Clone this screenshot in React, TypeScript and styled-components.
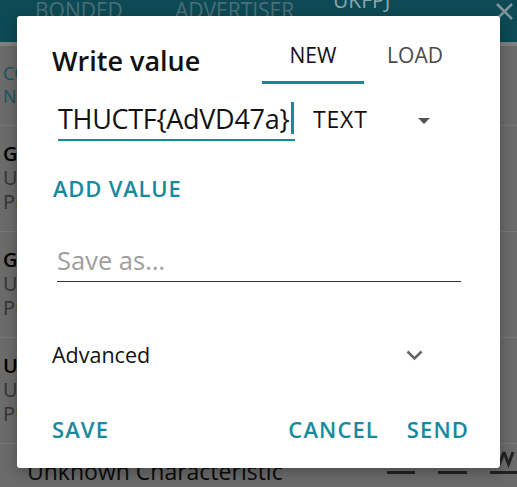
import React from "react";
import styled, { createGlobalStyle } from "styled-components";

const TEAL = "#17899d";

const Global = createGlobalStyle`
  html, body { margin: 0; padding: 0; background: #6b6b6b; overflow: hidden; }
  body { font-family: "Open Sans", "Liberation Sans", sans-serif; }
  * { box-sizing: border-box; }
`;

const Screen = styled.div`
  position: relative;
  width: 517px;
  height: 487px;
  overflow: hidden;
  background: #6b6b6b;
  font-family: "Open Sans", "Liberation Sans", sans-serif;
`;

/* ---------- background page (dimmed by the modal) ---------- */

const AppBar = styled.header`
  height: 42px;
  background: #0d4a55;
  display: flex;
  align-items: flex-start;
  padding-left: 35px;
`;

const AppTab = styled.div<{ $w?: number; $raised?: boolean }>`
  width: ${(p) => (p.$w ? `${p.$w}px` : "auto")};
  font-size: 21px;
  line-height: 1;
  color: ${(p) => (p.$raised ? "#8ea6aa" : "#4c6f76")};
  margin-top: ${(p) => (p.$raised ? "-10px" : "0")};
  white-space: nowrap;
`;

const CloseIcon = styled.svg`
  margin-left: auto;
  margin-right: 3px;
  margin-top: 2px;
  flex-shrink: 0;
`;

const AppBarEdge = styled.div`
  height: 4px;
  background: #7f7f7f;
`;

const ListHeader = styled.div`
  height: 79px;
  padding: 16px 0 0 3px;
  font-size: 18px;
  line-height: 23px;
  color: #14555f;
  white-space: nowrap;
`;

const ServiceItem = styled.div`
  height: 106px;
  border-top: 1px solid #787878;
  padding: 16px 0 0 3px;
  white-space: nowrap;
`;

const ItemTitle = styled.div`
  font-size: 20px;
  line-height: 24px;
  font-weight: 600;
  color: #000;
`;

const ItemSub = styled.div`
  font-size: 20px;
  line-height: 24px;
  color: #343434;
`;

const CharRow = styled.div`
  display: flex;
  align-items: flex-start;
  border-top: 1px solid #787878;
  padding: 13px 0 0 27px;
  height: 60px;
`;

const CharName = styled.div`
  font-size: 23px;
  line-height: 28px;
  color: #0a0a0a;
  white-space: nowrap;
`;

const CharIcons = styled.div`
  margin-left: auto;
  margin-right: -2px;
  margin-top: -10px;
  display: flex;
  gap: 23px;
`;

/* ---------- dialog ---------- */

const Dialog = styled.div`
  position: absolute;
  left: 17px;
  top: 16px;
  width: 483px;
  height: 452px;
  background: #fff;
  border-radius: 3px;
  box-shadow: 0 4px 14px rgba(0, 0, 0, 0.3);
  padding: 0 34px 0 35px;
  display: flex;
  flex-direction: column;
  color: #111;
`;

const TitleRow = styled.div`
  display: flex;
  height: 68px;
  flex-shrink: 0;
`;

const Title = styled.h2`
  margin: 0;
  height: 68px;
  padding-top: 21px;
  display: flex;
  align-items: center;
  font-size: 27px;
  line-height: 1;
  font-weight: 600;
  letter-spacing: 0;
  white-space: nowrap;
`;

const Tabs = styled.div`
  margin-left: auto;
  display: flex;
`;

const Tab = styled.div<{ $active?: boolean }>`
  width: 102px;
  height: 68px;
  padding-top: 14px;
  display: flex;
  align-items: center;
  justify-content: center;
  font-size: 21px;
  line-height: 1;
  color: ${(p) => (p.$active ? "#111" : "#4a4a4a")};
  border-bottom: 3px solid ${(p) => (p.$active ? TEAL : "transparent")};
`;

const InputRow = styled.div`
  display: flex;
  align-items: flex-end;
  height: 57px;
  flex-shrink: 0;
`;

const ValueField = styled.div`
  margin-left: 6px;
  width: 237px;
  height: 44px;
  border-bottom: 2px solid ${TEAL};
  display: flex;
  align-items: center;
  font-size: 27px;
  line-height: 1;
  letter-spacing: -0.3px;
  color: #111;
  white-space: nowrap;
`;

const Caret = styled.span`
  display: inline-block;
  width: 2.5px;
  height: 32px;
  margin-left: 2px;
  background: ${TEAL};
`;

const TypeSelect = styled.div`
  margin-left: 18px;
  width: 117px;
  height: 44px;
  display: flex;
  align-items: center;
  justify-content: space-between;
  font-size: 23px;
  line-height: 1;
  letter-spacing: 0.8px;
  color: #111;
`;

const Triangle = styled.span`
  width: 0;
  height: 0;
  margin-top: 3px;
  border-left: 6.5px solid transparent;
  border-right: 6.5px solid transparent;
  border-top: 6px solid #555;
`;

const TextButton = styled.button`
  background: none;
  border: 0;
  padding: 0;
  font-family: inherit;
  font-size: 22px;
  line-height: 1;
  font-weight: 600;
  letter-spacing: 1.1px;
  color: ${TEAL};
  white-space: nowrap;
  cursor: pointer;
`;

const AddValue = styled(TextButton)`
  align-self: flex-start;
  margin: 27px 0 0 1px;
  height: 40px;
  letter-spacing: 0.8px;
`;

const SaveInput = styled.input`
  margin: 31px 0 0 5px;
  width: 404px;
  height: 43px;
  flex-shrink: 0;
  padding: 0;
  border: 0;
  border-bottom: 1px solid #333;
  outline: none;
  background: transparent;
  font-family: inherit;
  font-size: 25.5px;
  color: #111;
  &::placeholder { color: #9e9e9e; }
`;

const AdvancedRow = styled.div`
  margin-top: 49px;
  height: 48px;
  flex-shrink: 0;
  display: flex;
  align-items: center;
  justify-content: space-between;
  padding-right: 43px;
  font-size: 21.5px;
  line-height: 1;
  font-weight: 500;
  color: #111;
`;

const ButtonRow = styled.div`
  margin-top: 29px;
  margin-right: -3px;
  height: 41px;
  flex-shrink: 0;
  display: flex;
  align-items: center;
`;

const Spacer = styled.div`
  flex: 1;
`;

const SendButton = styled(TextButton)`
  margin-left: 28px;
`;

const ReadIcon = () => (
  <svg width="28" height="28" viewBox="0 0 28 28">
    <path d="M14 4v14M8 12l6 6 6-6" stroke="#222" strokeWidth="3" fill="none" />
    <rect x="0" y="24" width="28" height="3" fill="#222" />
  </svg>
);
const WriteIcon = () => (
  <svg width="29" height="28" viewBox="0 0 29 28">
    <path d="M14.5 20V6M8.5 12l6-6 6 6" stroke="#222" strokeWidth="3" fill="none" />
    <rect x="0" y="24" width="29" height="3" fill="#222" />
  </svg>
);
const NotifyIcon = () => (
  <svg width="29" height="28" viewBox="0 0 29 28">
    <path d="M5 5l4.5 12L14 5M14 5l4.5 12L23 5" stroke="#222" strokeWidth="3" fill="none" />
    <rect x="0" y="24" width="29" height="3" fill="#222" />
  </svg>
);

export default function App() {
  return (
    <>
      <Global />
      <Screen>
        <AppBar>
          <AppTab $w={140}>BONDED</AppTab>
          <AppTab $w={158}>ADVERTISER</AppTab>
          <AppTab $raised>UKFPJ</AppTab>
          <CloseIcon width="19" height="19" viewBox="0 0 19 19">
            <path d="M2 2l15 15M17 2L2 17" stroke="#7f9599" strokeWidth="2.5" />
          </CloseIcon>
        </AppBar>
        <AppBarEdge />
        <ListHeader>
          <div>CONNECTED</div>
          <div>NOT BONDED</div>
        </ListHeader>
        <ServiceItem>
          <ItemTitle>Generic Access</ItemTitle>
          <ItemSub>UUID: 0x1800</ItemSub>
          <ItemSub>PRIMARY SERVICE</ItemSub>
        </ServiceItem>
        <ServiceItem>
          <ItemTitle>Generic Attribute</ItemTitle>
          <ItemSub>UUID: 0x1801</ItemSub>
          <ItemSub>PRIMARY SERVICE</ItemSub>
        </ServiceItem>
        <ServiceItem>
          <ItemTitle>Unknown Service</ItemTitle>
          <ItemSub>UUID: 0000ffe0-0000-1000-8000-00805f9b34fb</ItemSub>
          <ItemSub>PRIMARY SERVICE</ItemSub>
        </ServiceItem>
        <CharRow>
          <CharName>Unknown Characteristic</CharName>
          <CharIcons>
            <ReadIcon />
            <WriteIcon />
            <NotifyIcon />
          </CharIcons>
        </CharRow>

        <Dialog role="dialog">
          <TitleRow>
            <Title>Write value</Title>
            <Tabs>
              <Tab $active>NEW</Tab>
              <Tab>LOAD</Tab>
            </Tabs>
          </TitleRow>
          <InputRow>
            <ValueField>
              THUCTF{"{"}AdVD47a{"}"}
              <Caret />
            </ValueField>
            <TypeSelect>
              TEXT
              <Triangle />
            </TypeSelect>
          </InputRow>
          <AddValue>ADD VALUE</AddValue>
          <SaveInput placeholder="Save as…" />
          <AdvancedRow>
            Advanced
            <svg width="17" height="11" viewBox="0 0 17 11">
              <path d="M1.5 1.5l7 7 7-7" stroke="#666" strokeWidth="2.6" fill="none" />
            </svg>
          </AdvancedRow>
          <ButtonRow>
            <TextButton>SAVE</TextButton>
            <Spacer />
            <TextButton>CANCEL</TextButton>
            <SendButton>SEND</SendButton>
          </ButtonRow>
        </Dialog>
      </Screen>
    </>
  );
}
